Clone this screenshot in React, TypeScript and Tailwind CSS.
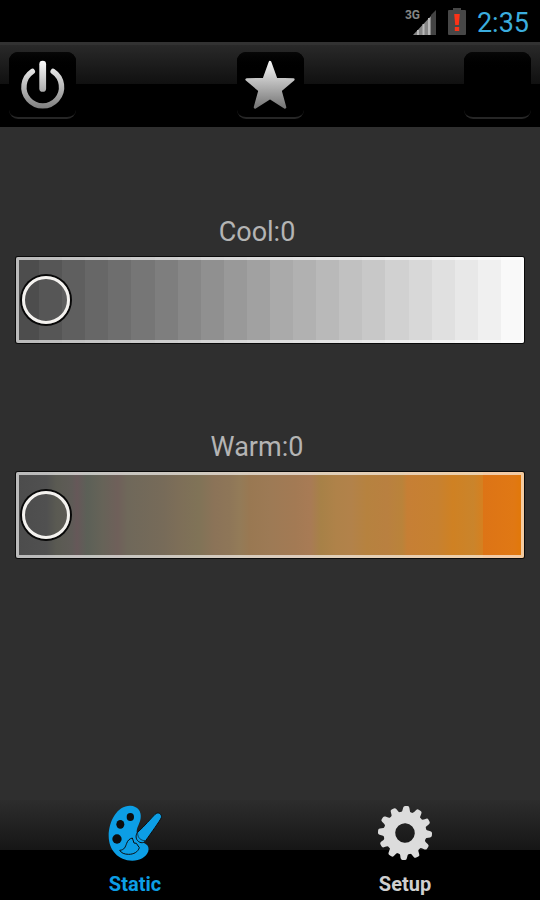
import { useState } from "react";
import type { ReactNode } from "react";
import clsx from "clsx";

const COOL = [
  "#4d4d4d", "#565656", "#5f5f5f", "#676767", "#6e6e6e", "#767676", "#7e7e7e", "#878787",
  "#909090", "#999999", "#a1a1a1", "#aaaaaa", "#b1b1b1", "#b9b9b9", "#c1c1c1", "#c8c8c8",
  "#d1d1d1", "#d8d8d8", "#e0e0e0", "#e8e8e8", "#f0f0f0", "#f9f9f9",
];

/* Every cool step is a flat band */
const coolGradient = `linear-gradient(to right, ${COOL.map(
  (color, i) => `${color} ${(i * 100) / COOL.length}% ${((i + 1) * 100) / COOL.length}%`
).join(", ")})`;

const WARM: [string, number][] = [
  ["#4c4c4c", 0], ["#505050", 6], ["#5a5a52", 8], ["#5f5b57", 11], ["#665859", 12],
  ["#5c6057", 14], ["#666358", 17], ["#6f605a", 20], ["#6f685a", 22], ["#776b59", 29],
  ["#7d6e58", 32], ["#807357", 36], ["#8b7358", 39], ["#8e7658", 42], ["#937b58", 44],
  ["#997852", 46], ["#9d7a55", 50], ["#a37a54", 55], ["#a87b55", 58], ["#a78147", 60],
  ["#af8249", 63], ["#b2824a", 66], ["#b6823f", 69], ["#b98040", 73], ["#ba833a", 76],
  ["#c67f35", 77], ["#c78130", 83], ["#cf8123", 86], ["#ca842b", 90], ["#d6801f", 92],
  ["#d8801d", 92], ["#dd7416", 92], ["#e07814", 98], ["#e27805", 100],
];

const warmGradient = `linear-gradient(to right, ${WARM.map(([color, at]) => `${color} ${at}%`).join(", ")})`;

const PowerIcon = () => (
  <svg viewBox="0 0 67 67" className="size-full" fill="none" strokeLinecap="round" aria-hidden="true">
    <defs>
      <linearGradient id="power" gradientUnits="userSpaceOnUse" x1="0" y1="8" x2="0" y2="58">
        <stop offset="0" stopColor="#ffffff" />
        <stop offset="1" stopColor="#808080" />
      </linearGradient>
    </defs>
    <path d="M23 20 A19.4 19.4 0 1 0 44.5 20" stroke="url(#power)" strokeWidth="5.6" />
    <rect x="30.2" y="9" width="7" height="32" rx="3.5" fill="url(#power)" />
  </svg>
);

const StarIcon = () => (
  <svg viewBox="0 0 67 67" className="size-full" aria-hidden="true">
    <defs>
      <linearGradient id="star" x1="0" y1="0" x2="0" y2="1">
        <stop offset="0" stopColor="#f4f4f4" />
        <stop offset="1" stopColor="#777777" />
      </linearGradient>
    </defs>
    <path
      d="M33 10.5 L39.3 28 L57 28.4 L43.6 39.6 L48.4 57 L33 47.2 L17.6 57 L22.4 39.6 L9 28.4 L26.7 28 Z"
      fill="url(#star)"
      stroke="url(#star)"
      strokeWidth="2.8"
      strokeLinejoin="round"
    />
  </svg>
);

const PaletteIcon = () => (
  <svg viewBox="50 40 168 174" className="h-[58px] w-14" strokeLinejoin="round" aria-hidden="true">
    <path
      d="M120 45 C142 46 154 62 151 82 C149 98 140 108 139 122 C138 140 150 152 166 160 C174 164 176 172 174 182 C168 200 148 210 126 210 C84 210 55 178 55 136 C55 90 82 44 120 45 Z"
      fill="#0c9ee5"
    />
    <g fill="#0d0d0d">
      <ellipse cx="120" cy="79" rx="11" ry="12" />
      <ellipse cx="90" cy="101" rx="12" ry="13" />
      <ellipse cx="80" cy="145" rx="14" ry="14" />
    </g>
    <path
      d="M88 179 C103 178 105 168 109 158 C112 149 118 144 126 142 L131 157 L138 158 L147 171 C143 184 130 191 115 191 C102 191 93 187 88 179 Z"
      fill="#0c9ee5"
      stroke="#0d0d0d"
      strokeWidth="3"
    />
    <path
      d="M194 71 C203 62 216 70 213 81 C209 90 183 126 166 150 C159 160 145 157 139 146 C135 136 138 128 146 121 C160 109 183 82 194 71 Z"
      fill="#0c9ee5"
      stroke="#0d0d0d"
      strokeWidth="3"
    />
    <path d="M142 128 C142 141 151 150 165 150" fill="none" stroke="#0d0d0d" strokeWidth="2" />
  </svg>
);

const GearIcon = () => (
  <svg viewBox="-28 -29 56 58" className="h-[58px] w-14" aria-hidden="true">
    <g fill="#dcdcdc" transform="rotate(3)">
      {Array.from({ length: 12 }, (_, i) => (
        <path
          key={i}
          transform={`rotate(${i * 30})`}
          d="M-5.6 -19 Q-3.4 -21.5 -3.1 -25.3 Q-2.8 -27 -1.2 -27 H1.2 Q2.8 -27 3.1 -25.3 Q3.4 -21.5 5.6 -19 Z"
        />
      ))}
      <path fillRule="evenodd" d="M0 -21.5 A21.5 21.5 0 1 1 0 21.5 A21.5 21.5 0 1 1 0 -21.5 Z M0 -9.8 A9.8 9.8 0 1 0 0 9.8 A9.8 9.8 0 1 0 0 -9.8 Z" />
    </g>
  </svg>
);

const StatusBar = () => (
  <div className="flex h-[42px] items-center justify-end gap-[11px] bg-black pt-1 pr-[11px]">
    <div className="flex items-center gap-[11px] pb-1">
      <div className="relative h-[29px] w-8">
        <span className="absolute top-0 left-0 text-xs leading-4 font-bold text-[#858585]">3G</span>
        <svg viewBox="0 0 32 29" className="size-full" aria-hidden="true">
          <path d="M8 28 L26 9 V28 Z" fill="#858585" />
          <path d="M26 8 L31 3 V28 H26 Z" fill="#444444" />
          <path d="M13 23 V28 M18.5 17 V28 M24 11 V28" stroke="#b8b8b8" strokeWidth="2" />
        </svg>
      </div>
      <svg viewBox="0 0 18 27" className="h-[27px] w-[18px]" aria-hidden="true">
        <path d="M5 0 H13 V2 H17 Q18 2 18 3 V26 Q18 27 17 27 H1 Q0 27 0 26 V3 Q0 2 1 2 H5 Z" fill="#474747" />
        <path d="M6.2 6 H11.8 L10.8 17 H7.2 Z M6.8 19 H11.2 V23 H6.8 Z" fill="#fb3318" />
      </svg>
    </div>
    <time className="text-[27px] leading-8 text-[#3badde]">2:35</time>
  </div>
);

const HeaderButton = ({ label, children }: { label: string; children?: ReactNode }) => (
  <button
    type="button"
    aria-label={label}
    className="size-[67px] rounded-[9px] border-b-2 border-[#262626] bg-black bg-linear-to-b from-[#070707] to-black to-30%"
  >
    {children}
  </button>
);

type ColorSliderProps = {
  name: string;
  value: number;
  background: string;
  onChange: (value: number) => void;
};

const ColorSlider = ({ name, value, background, onChange }: ColorSliderProps) => (
  <div className="flex flex-col gap-[9px]">
    <label htmlFor={name} className="pr-[26px] text-center text-[27px] leading-8 text-[#b4b4b4]">
      {name}:{value}
    </label>
    <input
      id={name}
      type="range"
      min={0}
      max={100}
      value={value}
      onChange={(e) => onChange(Number(e.target.value))}
      style={{ background }}
      className="m-0 h-[86px] w-full appearance-none rounded-xs px-[6px] shadow-[inset_0_0_0_3px_rgba(255,255,255,0.62),0_0_0_1px_#0a0a0a] outline-none [&::-webkit-slider-thumb]:size-12 [&::-webkit-slider-thumb]:appearance-none [&::-webkit-slider-thumb]:rounded-full [&::-webkit-slider-thumb]:border-3 [&::-webkit-slider-thumb]:border-[#f4f2ef] [&::-webkit-slider-thumb]:bg-transparent [&::-webkit-slider-thumb]:shadow-[0_0_0_2px_#080808]"
    />
  </div>
);

type TabProps = {
  label: string;
  active: boolean;
  onClick: () => void;
  children: ReactNode;
};

const Tab = ({ label, active, onClick, children }: TabProps) => (
  <button
    type="button"
    aria-pressed={active}
    onClick={onClick}
    className={clsx(
      "flex flex-1 flex-col items-center gap-2 pt-1",
      active ? "text-[#0c9ee5]" : "text-[#cfcfcf]"
    )}
  >
    {children}
    <span className="text-xl leading-7 font-bold">{label}</span>
  </button>
);

const App = () => {
  const [cool, setCool] = useState(0);
  const [warm, setWarm] = useState(0);
  const [tab, setTab] = useState("Static");

  return (
    <div className="flex min-h-screen flex-col bg-[#2f2f2f] font-[Roboto,sans-serif]">
      <StatusBar />

      <header className="flex justify-between border-t-3 border-[#323232] bg-black bg-linear-to-b from-[#292929] from-0% via-[#101010] via-48% to-black to-48% px-[9px] pt-[7px] pb-2">
        <HeaderButton label="Power">
          <PowerIcon />
        </HeaderButton>
        <HeaderButton label="Favorites">
          <StarIcon />
        </HeaderButton>
        <HeaderButton label="Current color" />
      </header>

      <main className="flex flex-1 flex-col gap-[88px] px-4 pt-[89px]">
        <ColorSlider name="Cool" value={cool} background={coolGradient} onChange={setCool} />
        <ColorSlider name="Warm" value={warm} background={warmGradient} onChange={setWarm} />
      </main>

      <nav className="flex bg-linear-to-b from-[#2d2d2d] from-0% via-[#161616] via-50% to-black to-50% pb-[2px]">
        <Tab label="Static" active={tab === "Static"} onClick={() => setTab("Static")}>
          <PaletteIcon />
        </Tab>
        <Tab label="Setup" active={tab === "Setup"} onClick={() => setTab("Setup")}>
          <GearIcon />
        </Tab>
      </nav>
    </div>
  );
};

export default App;
